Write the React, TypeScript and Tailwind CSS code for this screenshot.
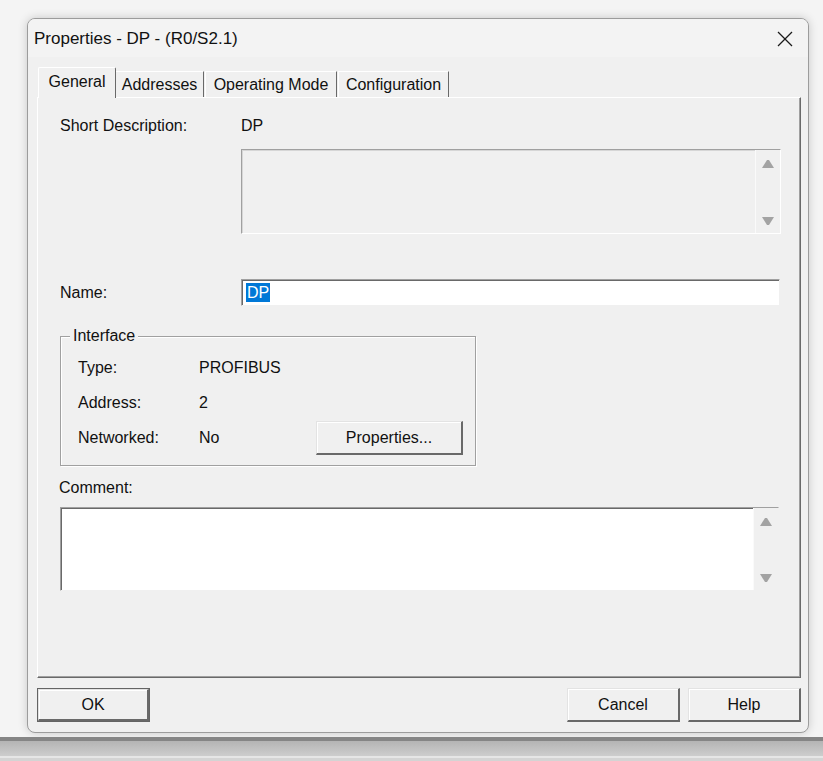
import React from "react";

const font = { fontFamily: '"Liberation Sans", Arial, sans-serif' };

function UpArrow() {
  return (
    <svg width="12" height="8" viewBox="0 0 12 8">
      <polygon points="0,8 5,0 7,0 12,8" fill="#a3a3a3" />
    </svg>
  );
}
function DownArrow() {
  return (
    <svg width="12" height="8" viewBox="0 0 12 8">
      <polygon points="0,0 12,0 7,8 5,8" fill="#a3a3a3" />
    </svg>
  );
}

function ScrollCol({ bg }: { bg: string }) {
  return (
    <div
      className={`flex flex-col items-center justify-between pt-[10px] pb-[8px] w-[25px] border-l border-l-[#fafafa] ${bg}`}
    >
      <UpArrow />
      <DownArrow />
    </div>
  );
}

function Btn({ label, isDefault, w }: { label: string; isDefault?: boolean; w: string }) {
  return (
    <div
      className={
        isDefault
          ? `${w} h-[34px] border border-[#646464] bg-[#f0f0f0] flex`
          : `${w} h-[34px] flex`
      }
    >
      <div className="flex-1 flex items-center justify-center bg-[#f0f0f0] border-t border-l border-t-[#e3e3e3] border-l-[#e3e3e3] border-r-2 border-b-2 border-r-[#696969] border-b-[#696969] shadow-[inset_1px_1px_0_#ffffff] text-[16px] text-[#111]">
        {label}
      </div>
    </div>
  );
}

export default function App() {
  return (
    <div
      className="w-[823px] h-[761px] bg-[#f4f4f4] flex flex-col overflow-hidden"
      style={font}
    >
      {/* dialog */}
      <div className="ml-[27px] mt-[18px] w-[782px] h-[715px] rounded-[8px] border border-[#9c9c9c] bg-[#f0f0f0] flex flex-col overflow-hidden shadow-[0_0_10px_rgba(0,0,0,0.18)] shrink-0">
        {/* title bar */}
        <div className="h-[38px] bg-[#f3f3f3] flex items-center justify-between pl-[6px] pr-[15px] shrink-0">
          <span className="text-[17px] text-[#111] leading-[20px] mt-[1px]">
            Properties - DP - (R0/S2.1)
          </span>
          <svg width="16" height="16" viewBox="0 0 16 16" className="mt-[1px]">
            <line x1="1" y1="1" x2="15" y2="15" stroke="#1a1a1a" strokeWidth="1.3" />
            <line x1="15" y1="1" x2="1" y2="15" stroke="#1a1a1a" strokeWidth="1.3" />
          </svg>
        </div>

        {/* body */}
        <div className="flex flex-col pl-[9px] pt-[10px] pb-[10px]">
          {/* tabs */}
          <div className="flex items-end h-[30px] pl-[1px] text-[16px] text-[#111]">
            <div className="relative z-10 w-[78px] h-[31px] -mb-px bg-[#f0f0f0] border-t border-l border-t-white border-l-white border-r border-r-[#696969] rounded-t-[2px] flex items-center justify-center pb-[2px]">
              General
            </div>
            <div className="w-[88px] h-[26px] border-t border-t-white border-r border-r-[#696969] flex items-center justify-center">
              Addresses
            </div>
            <div className="w-[132px] h-[26px] ml-px border-t border-l border-t-white border-l-white border-r border-r-[#696969] flex items-center justify-center">
              Operating Mode
            </div>
            <div className="w-[111px] h-[26px] ml-px border-t border-l border-t-white border-l-white border-r border-r-[#696969] flex items-center justify-center">
              Configuration
            </div>
          </div>

          {/* panel */}
          <div className="w-[764px] h-[581px] border-t border-l border-t-white border-l-white border-r border-b border-r-[#696969] border-b-[#696969] shadow-[inset_-1px_-1px_0_#a0a0a0] pl-[22px] pt-[19px] flex flex-col text-[16px] text-[#111]">
            <div className="flex items-center h-[18px] leading-[18px]">
              <span className="w-[181px]">Short Description:</span>
              <span>DP</span>
            </div>
            <div className="ml-[181px] mt-[14px] w-[540px] h-[85px] flex border-t border-l border-t-[#a0a0a0] border-l-[#a0a0a0] border-r border-b border-r-white border-b-white shadow-[inset_1px_1px_0_#d6d6d6] bg-[#f0f0f0]">
              <div className="flex-1" />
              <ScrollCol bg="bg-[#f0f0f0]" />
            </div>

            <div className="flex items-center mt-[45px] h-[27px]">
              <span className="w-[181px] leading-[18px]">Name:</span>
              <div className="w-[539px] h-[27px] bg-white border-t border-l border-t-[#a0a0a0] border-l-[#a0a0a0] border-r border-b border-r-[#f0f0f0] border-b-[#f0f0f0] shadow-[inset_1px_1px_0_#696969] flex items-center pl-[4px]">
                <span className="bg-[#0078d7] text-white leading-[19px] h-[19px] px-[1px]">DP</span>
              </div>
            </div>

            <fieldset className="mt-[21px] w-[416px] border border-[#a0a0a0] shadow-[inset_1px_1px_0_#ffffff,1px_1px_0_#ffffff] pl-[17px] pb-[10px]">
              <legend className="ml-[-8px] px-[3px] bg-[#f0f0f0] leading-[18px]">Interface</legend>
              <div className="flex items-center h-[34px] mt-[6px]">
                <span className="w-[121px]">Type:</span>
                <span>PROFIBUS</span>
              </div>
              <div className="flex items-center h-[34px] mt-px">
                <span className="w-[121px]">Address:</span>
                <span>2</span>
              </div>
              <div className="flex items-center h-[34px] mt-px">
                <span className="w-[121px]">Networked:</span>
                <span className="w-[117px]">No</span>
                <Btn label="Properties..." w="w-[147px]" />
              </div>
            </fieldset>

            <div className="mt-[13px] h-[18px] leading-[18px] -ml-px">Comment:</div>
            <div className="mt-[10px] w-[719px] h-[84px] flex bg-white border-t border-l border-t-[#a0a0a0] border-l-[#a0a0a0] border-r border-b border-r-[#f0f0f0] border-b-[#f0f0f0] shadow-[inset_1px_1px_0_#696969]">
              <div className="flex-1" />
              <ScrollCol bg="bg-[#f0f0f0]" />
            </div>
          </div>

          {/* buttons */}
          <div className="mt-[10px] w-[764px] flex items-center">
            <Btn label="OK" isDefault w="w-[113px]" />
            <div className="flex-1" />
            <Btn label="Cancel" w="w-[113px]" />
            <div className="w-[8px]" />
            <Btn label="Help" w="w-[113px]" />
          </div>
        </div>
      </div>

      {/* bottom taskbar-like bands */}
      <div className="mt-[4px] h-[4px] bg-[#858585] shrink-0" />
      <div className="h-[15px] bg-gradient-to-b from-[#b4b4b4] to-[#cdcdcd] shrink-0" />
      <div className="h-[2px] bg-[#e6e6e6] shrink-0" />
      <div className="flex-1 bg-[#d4d4d4]" />
    </div>
  );
}
